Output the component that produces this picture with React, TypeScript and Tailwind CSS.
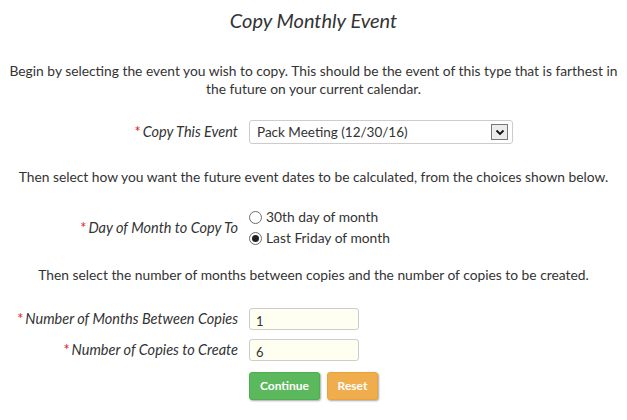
import React, { useState } from 'react';

const Req = () => <span className="text-[#e02020] not-italic mr-[2px]">*</span>;

const Radio: React.FC<{ checked: boolean; label: string; onClick: () => void }> = ({ checked, label, onClick }) => (
  <div className="flex items-center gap-[4px] h-[21px] cursor-pointer" onClick={onClick}>
    <span className="w-[13px] h-[13px] rounded-full border border-[#6d6d6d] bg-white flex items-center justify-center">
      {checked && <span className="w-[7px] h-[7px] rounded-full bg-[#222]" />}
    </span>
    <span>{label}</span>
  </div>
);

const labelCls = 'w-[244px] shrink-0 text-right italic pr-[11px] text-[14.5px]';
const inputCls =
  'w-[110px] h-[22px] border border-[#ccc] rounded-[3px] bg-[#fefff0] px-[6px] pt-[3px] text-[13px] outline-none';

const App: React.FC = () => {
  const [day, setDay] = useState('friday');
  const [months, setMonths] = useState('1');
  const [copies, setCopies] = useState('6');

  return (
    <div className="w-[627px] h-[420px] bg-white text-[#333] text-[13.8px] px-[5px] pt-[8px] font-['Lato','Open_Sans',sans-serif]">
      <h1 className="text-center italic text-[20px] leading-[24px] text-[#333]">Copy Monthly Event</h1>

      <p className="text-center leading-[18px] mt-[30px]">
        Begin by selecting the event you wish to copy. This should be the event of this type that is farthest in the future on your current calendar.
      </p>

      <div className="flex items-center mt-[22px]">
        <div className={labelCls}><Req />Copy This Event</div>
        <div className="w-[264px] h-[24px] border border-[#ccc] rounded-[3px] bg-white flex items-center justify-between pl-[7px] pr-[4px] text-[13.5px]">
          <span>Pack Meeting (12/30/16)</span>
          <span className="w-[17px] h-[16px] border border-[#777] bg-[#ececec] flex items-center justify-center">
            <svg width="10" height="7" viewBox="0 0 10 7">
              <path d="M1.5 1.5 L5 5 L8.5 1.5" stroke="#111" strokeWidth="1.8" fill="none" />
            </svg>
          </span>
        </div>
      </div>

      <p className="text-center leading-[18px] mt-[24px]">
        Then select how you want the future event dates to be calculated, from the choices shown below.
      </p>

      <div className="flex items-center mt-[21px]">
        <div className={labelCls}><Req />Day of Month to Copy To</div>
        <div className="flex flex-col">
          <Radio checked={day === 'thirtieth'} label="30th day of month" onClick={() => setDay('thirtieth')} />
          <Radio checked={day === 'friday'} label="Last Friday of month" onClick={() => setDay('friday')} />
        </div>
      </div>

      <p className="text-center leading-[18px] mt-[17px]">
        Then select the number of months between copies and the number of copies to be created.
      </p>

      <div className="flex flex-col gap-[9px] mt-[24px]">
        <div className="flex items-center">
          <div className={labelCls}><Req />Number of Months Between Copies</div>
          <input value={months} onChange={(e) => setMonths(e.target.value)} className={inputCls} />
        </div>
        <div className="flex items-center">
          <div className={labelCls}><Req />Number of Copies to Create</div>
          <input value={copies} onChange={(e) => setCopies(e.target.value)} className={inputCls} />
        </div>
        <div className="flex items-center gap-[7px] pl-[244px] mt-[2px]">
          <button className="w-[71px] h-[28px] rounded-[3px] bg-[#5cb85c] border border-[#4cae4c] text-white font-bold text-[12px] shadow-[1px_1px_2px_rgba(0,0,0,0.35)]">
            Continue
          </button>
          <button className="w-[51px] h-[28px] rounded-[3px] bg-[#f0ad4e] border border-[#eea236] text-white font-bold text-[12px] shadow-[1px_1px_2px_rgba(0,0,0,0.35)]">
            Reset
          </button>
        </div>
      </div>
    </div>
  );
};

export default App;
